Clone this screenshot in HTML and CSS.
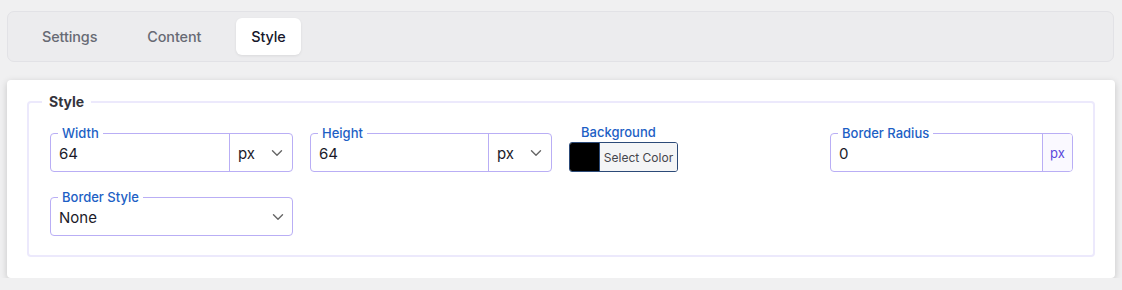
FILE: index.html
```html
<!DOCTYPE html>
<html lang="en">
<head>
<meta charset="utf-8">
<title>Style</title>
<link rel="stylesheet" href="styles.css">
</head>
<body>
<div class="page">
  <nav class="tabs">
    <button class="tab">Settings</button>
    <button class="tab">Content</button>
    <button class="tab active">Style</button>
  </nav>
  <section class="card">
    <fieldset class="group">
      <legend class="group-title">Style</legend>
      <div class="grid">
        <div class="field">
          <span class="float-label">Width</span>
          <span class="value">64</span>
          <span class="unit">px
            <svg class="chev" viewBox="0 0 12 8" width="12" height="8"><path d="M1.5 1.8 6 6.2 10.5 1.8" fill="none" stroke="#666" stroke-width="1.4" stroke-linecap="round" stroke-linejoin="round"/></svg>
          </span>
        </div>
        <div class="field">
          <span class="float-label">Height</span>
          <span class="value">64</span>
          <span class="unit">px
            <svg class="chev" viewBox="0 0 12 8" width="12" height="8"><path d="M1.5 1.8 6 6.2 10.5 1.8" fill="none" stroke="#666" stroke-width="1.4" stroke-linecap="round" stroke-linejoin="round"/></svg>
          </span>
        </div>
        <div class="color-cell">
          <span class="plain-label">Background</span>
          <div class="picker">
            <span class="swatch"></span>
            <span class="pick-btn">Select Color</span>
          </div>
        </div>
        <div class="field">
          <span class="float-label">Border Radius</span>
          <span class="value">0</span>
          <span class="addon">px</span>
        </div>
        <div class="field">
          <span class="float-label">Border Style</span>
          <span class="value">None</span>
          <svg class="chev chev-solo" viewBox="0 0 12 8" width="12" height="8"><path d="M1.5 1.8 6 6.2 10.5 1.8" fill="none" stroke="#666" stroke-width="1.4" stroke-linecap="round" stroke-linejoin="round"/></svg>
        </div>
      </div>
    </fieldset>
  </section>
</div>
</body>
</html>
```

FILE: styles.css
```css
* { box-sizing: border-box; }
html, body { margin: 0; padding: 0; }
body {
  background: #f0f0f1;
  font-family: Inter, "Noto Sans", "Liberation Sans", sans-serif;
  color: #1b1b2a;
}
.page {
  padding: 11px 7px 0 7px;
}
.tabs {
  display: flex;
  align-items: center;
  gap: 20px;
  height: 51px;
  padding: 0 19px;
  background: #ececee;
  border: 1px solid #e2e2e6;
  border-radius: 7px;
  margin-right: 1px;
}
.tab {
  font-family: inherit;
  font-size: 14.4px;
  letter-spacing: -0.1px;
  font-weight: 500;
  color: #676a74;
  background: transparent;
  border: 0;
  height: 37px;
  padding: 0 15px;
  border-radius: 6px;
  cursor: pointer;
}
.tab.active {
  background: #fff;
  color: #17172b;
  box-shadow: 0 1px 3px rgba(0, 0, 0, 0.08);
}
.card {
  margin-top: 18px;
  background: #fff;
  border-radius: 4px;
  box-shadow: 0 2px 7px rgba(0, 0, 0, 0.18);
  padding: 13px 21px 21px 20px;
}
.group {
  margin: 0;
  border: 2px solid #ece9fc;
  border-radius: 4px;
  padding: 14px 20px 19px 21px;
}
.group-title {
  font-size: 14px;
  line-height: 17px;
  font-weight: 700;
  color: #34343c;
  padding: 0 7px;
  margin-left: -8px;
}
.grid {
  display: grid;
  grid-template-columns: 243px 242px 244px 243px;
  column-gap: 17px;
  row-gap: 25px;
  align-items: end;
}
.field {
  position: relative;
  height: 39px;
  border: 1px solid #b9aef5;
  border-radius: 4px;
  display: flex;
  align-items: stretch;
}
.float-label {
  position: absolute;
  top: -9px;
  left: 7px;
  padding: 0 4px;
  background: #fff;
  font-size: 13px;
  line-height: 16px;
  font-weight: 500;
  color: #1d5fc5;
}
.value {
  flex: 1;
  display: flex;
  align-items: center;
  padding: 1px 8px 0;
  font-size: 15px;
  color: #1b1b2a;
}
.unit {
  width: 63px;
  border-left: 1px solid #b9aef5;
  display: flex;
  align-items: center;
  justify-content: space-between;
  padding: 1px 9px 0 8px;
  font-size: 15px;
  color: #1b1b2a;
}
.chev { display: block; }
.chev-solo { align-self: center; margin-right: 8px; }
.addon {
  width: 30px;
  border-left: 1px solid #b9aef5;
  background: #faf9ff;
  border-radius: 0 3px 3px 0;
  display: flex;
  align-items: center;
  justify-content: center;
  font-size: 13px;
  color: #5a49dc;
}
.color-cell {
  display: flex;
  flex-direction: column;
  gap: 2px;
}
.plain-label {
  font-size: 13px;
  line-height: 16px;
  font-weight: 500;
  color: #1d5fc5;
  padding-left: 12px;
}
.picker {
  width: 109px;
  height: 30px;
  border: 1px solid #2c4a78;
  border-radius: 3px;
  display: flex;
  overflow: hidden;
}
.swatch {
  width: 30px;
  background: #000;
  border-right: 1px solid #2c4a78;
}
.pick-btn {
  flex: 1;
  background: #f4f5f6;
  display: flex;
  align-items: center;
  justify-content: center;
  font-size: 12px;
  color: #45464c;
}
```
